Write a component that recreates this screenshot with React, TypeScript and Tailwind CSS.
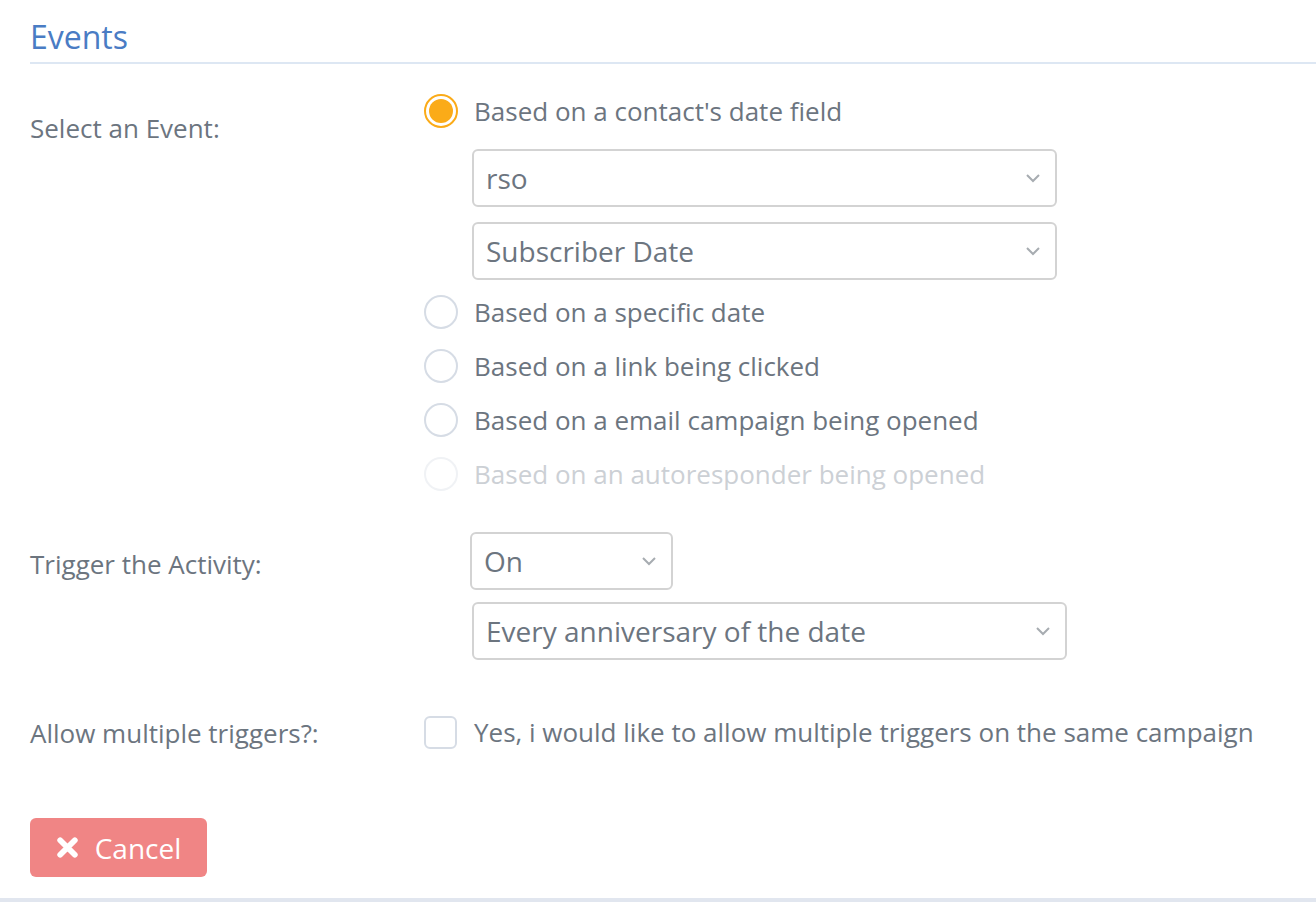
const FONT = { fontFamily: '"Open Sans", "Liberation Sans", sans-serif' };

const Chevron = () => (
  <svg width="16" height="10" viewBox="0 0 16 10" className="shrink-0">
    <polyline points="2,2 8,8 14,2" fill="none" stroke="#a7acb1" strokeWidth="2" />
  </svg>
);

const SelectBox = ({ value, className }: { value: string; className: string }) => (
  <div
    className={`flex h-[58px] items-center justify-between rounded-[6px] border-2 border-[#d3d3d3] pl-[12px] pr-[14px] text-[28px] text-[#6c757f] ${className}`}
  >
    <span>{value}</span>
    <Chevron />
  </div>
);

const Radio = ({ checked, disabled, label }: { checked?: boolean; disabled?: boolean; label: string }) => (
  <div className="flex h-[54px] items-center">
    {checked ? (
      <div className="flex h-[34px] w-[34px] items-center justify-center rounded-full border-2 border-[#fbab18]">
        <div className="h-[24px] w-[24px] rounded-full bg-[#fbab18]" />
      </div>
    ) : (
      <div
        className={`h-[34px] w-[34px] rounded-full border-2 ${disabled ? 'border-[#f0f2f5]' : 'border-[#d6dce5]'}`}
      />
    )}
    <span className={`ml-[16px] text-[26px] ${disabled ? 'text-[#ccd0d5]' : 'text-[#6c757f]'}`}>{label}</span>
  </div>
);

export default function App() {
  return (
    <div className="min-h-[902px] bg-white" style={FONT}>
      {/* Header */}
      <div className="pl-[30px]">
        <h2 className="border-b-2 border-[#dde7f3] pb-[5px] pt-[17px] text-[32px] leading-[40px] text-[#4a7cc4]">
          Events
        </h2>
      </div>

      <div className="px-[30px]">
        {/* Select an Event */}
        <div className="mt-[20px] flex">
          <div className="w-[394px] pt-[26px] text-[26px] leading-[36px] text-[#6c757f]">Select an Event:</div>
          <div className="flex flex-col">
            <Radio checked label="Based on a contact's date field" />
            <div className="ml-[48px] mt-[11px] flex flex-col gap-[15px]">
              <SelectBox value="rso" className="w-[585px]" />
              <SelectBox value="Subscriber Date" className="w-[585px]" />
            </div>
            <div className="mt-[5px]">
              <Radio label="Based on a specific date" />
              <Radio label="Based on a link being clicked" />
              <Radio label="Based on a email campaign being opened" />
              <Radio disabled label="Based on an autoresponder being opened" />
            </div>
          </div>
        </div>

        {/* Trigger the Activity */}
        <div className="mt-[31px] flex">
          <div className="w-[394px] pt-[14px] text-[26px] leading-[36px] text-[#6c757f]">Trigger the Activity:</div>
          <div className="flex flex-col gap-[12px]">
            <SelectBox value="On" className="ml-[46px] w-[203px]" />
            <SelectBox value="Every anniversary of the date" className="ml-[48px] w-[595px]" />
          </div>
        </div>

        {/* Allow multiple triggers */}
        <div className="mt-[54px] flex h-[36px] items-center">
          <div className="w-[394px] pt-[2px] text-[26px] leading-[36px] text-[#6c757f]">Allow multiple triggers?:</div>
          <div className="flex items-center">
            <div className="h-[33px] w-[33px] rounded-[6px] border-2 border-[#d6dce5]" />
            <span className="ml-[17px] text-[26px] leading-[36px] text-[#6c757f]">
              Yes, i would like to allow multiple triggers on the same campaign
            </span>
          </div>
        </div>

        {/* Cancel */}
        <button className="mt-[68px] flex h-[59px] w-[177px] items-center justify-center gap-[16px] rounded-[6px] bg-[#f08585] text-[28px] leading-[36px] text-white">
          <svg width="23" height="23" viewBox="0 0 22 22">
            <path d="M4 4 L18 18 M18 4 L4 18" stroke="white" strokeWidth="5.5" strokeLinecap="round" />
          </svg>
          <span>Cancel</span>
        </button>
      </div>

      <div className="mt-[21px] h-[4px] bg-[#e1e6ef]" />
    </div>
  );
}
